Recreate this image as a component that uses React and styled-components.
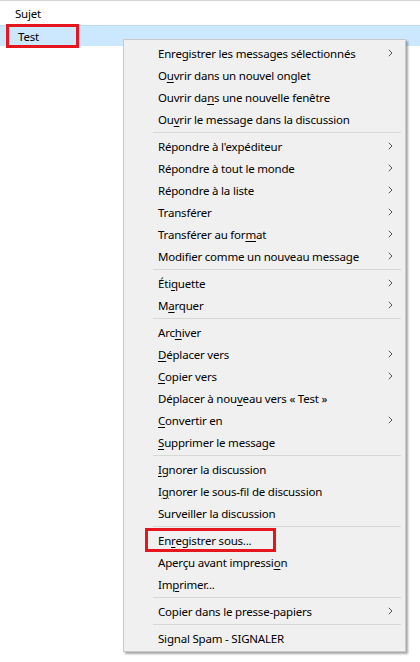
import React from 'react';
import styled, { createGlobalStyle } from 'styled-components';

const GlobalStyle = createGlobalStyle`
  html, body {
    margin: 0;
    padding: 0;
    background: #fff;
  }
  body {
    font-family: "Noto Sans", "Open Sans", sans-serif;
    font-size: 11.5px;
    letter-spacing: -0.2px;
    color: #000;
  }
`;

// Thread pane behind the popup
const Page = styled.div`
  position: relative;
  width: 420px;
  height: 662px;
  overflow: hidden;
`;

const HeaderRow = styled.div`
  display: flex;
  height: 25px;
  border-top: 1px solid #d5d5d5;
  box-sizing: border-box;
`;

const HeaderCell = styled.div`
  display: flex;
  align-items: center;
  box-sizing: border-box;
  padding-left: ${ ({ pad }) => pad || 0 }px;
  width: ${ ({ width }) => width }px;
  flex: ${ ({ last }) => (last ? 1 : 'none') };
`;

const ThreadRow = styled.div`
  display: flex;
  align-items: center;
  height: 21px;
  background: #cce8ff;
  border-top: 1px solid #b9dcf5;
  box-sizing: border-box;
  padding-left: 6px;
`;

const Highlight = styled.span`
  display: inline-flex;
  align-items: center;
  height: 24px;
  box-sizing: border-box;
  border: 3px solid #e5161e;
  padding-left: ${ ({ pad }) => pad }px;
  width: ${ ({ width }) => width }px;
`;

// Context menu
const Menu = styled.div`
  position: absolute;
  left: 123px;
  top: 39px;
  width: 283px;
  box-sizing: border-box;
  background: #f0f0f0;
  border: 1px solid #c9c9c9;
  box-shadow: 2px 2px 2px rgba(0, 0, 0, 0.35);
  padding: 2px 0;
`;

const Item = styled.div`
  display: flex;
  align-items: center;
  justify-content: space-between;
  height: 22px;
  padding-left: ${ ({ boxed }) => (boxed ? 21 : 34) }px;
  padding-right: 12px;
  white-space: nowrap;
`;

const Separator = styled.div`
  height: 5px;
  display: flex;
  align-items: center;
  padding-left: 29px;
  padding-right: 4px;
  &::after {
    content: '';
    flex: 1;
    height: 1px;
    background: #d7d7d7;
  }
`;

const Key = styled.span`
  text-decoration: underline;
  text-underline-offset: 2px;
`;

const Chevron = () => (
  <svg width='5' height='8' viewBox='0 0 5 8'>
    <polyline points='0.8,0.8 4,4 0.8,7.2' fill='none' stroke='#555' strokeWidth='1' />
  </svg>
);

// text with an access key: [before, key, after]
const groups = [
  [
    { t: ['Enregistrer les messages sélectionnés'], sub: true },
    { t: ['O', 'u', 'vrir dans un nouvel onglet'] },
    { t: ['Ouvrir da', 'n', 's une nouvelle fenêtre'] },
    { t: ['Ou', 'v', 'rir le message dans la discussion'] }
  ],
  [
    { t: ['Répondre à l\'expéditeur'], sub: true },
    { t: ['Répondre à tout le monde'], sub: true },
    { t: ['Répondre à la liste'], sub: true },
    { t: ['Transférer'], sub: true },
    { t: ['Transférer au for', 'm', 'at'], sub: true },
    { t: ['Modifier comme un nouveau message'], sub: true }
  ],
  [
    { t: ['Éti', 'q', 'uette'], sub: true },
    { t: ['M', 'a', 'rquer'], sub: true }
  ],
  [
    { t: ['Arc', 'h', 'iver'] },
    { t: ['', 'D', 'éplacer vers'], sub: true },
    { t: ['', 'C', 'opier vers'], sub: true },
    { t: ['Déplacer à nou', 'v', 'eau vers « Test »'] },
    { t: ['', 'C', 'onvertir en'], sub: true },
    { t: ['', 'S', 'upprimer le message'] }
  ],
  [
    { t: ['', 'I', 'gnorer la discussion'] },
    { t: ['I', 'g', 'norer le sous-fil de discussion'] },
    { t: ['Surveiller la discussion'] }
  ],
  [
    { t: ['En', 'r', 'egistrer sous...'], boxed: true },
    { t: ['Aperçu avant impressi', 'o', 'n'] },
    { t: ['Im', 'p', 'rimer...'] }
  ],
  [
    { t: ['Copier dans le presse-papiers'], sub: true }
  ],
  [
    { t: ['Signal Spam - SIGNALER'] }
  ]
];

const Label = ({ t }) => (
  <span>
    { t[0] }
    { t.length > 1 && <Key>{ t[1] }</Key> }
    { t[2] }
  </span>
);

const App = () => {
  return (
    <Page>
      <GlobalStyle />
      <HeaderRow>
        <HeaderCell pad={ 15 } width={ 284 }>Sujet</HeaderCell>
        <HeaderCell last />
      </HeaderRow>
      <ThreadRow>
        <Highlight pad={ 9 } width={ 73 }>Test</Highlight>
      </ThreadRow>

      <Menu>
        { groups.map((group, gi) => (
          <React.Fragment key={ gi }>
            { gi > 0 && <Separator /> }
            { group.map((item, ii) => (
              <Item key={ ii } boxed={ item.boxed }>
                { item.boxed ? (
                  <Highlight pad={ 10 } width={ 131 }>
                    <Label t={ item.t } />
                  </Highlight>
                ) : (
                  <Label t={ item.t } />
                ) }
                { item.sub && <Chevron /> }
              </Item>
            )) }
          </React.Fragment>
        )) }
      </Menu>
    </Page>
  );
};

export default App;
